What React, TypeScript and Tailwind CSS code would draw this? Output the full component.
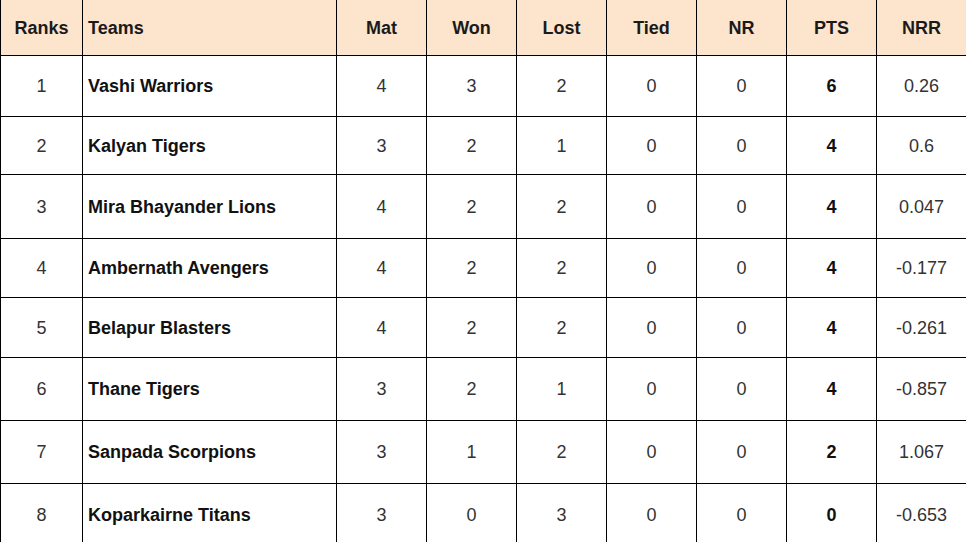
const ROWS = [
  { rank: 1, team: 'Vashi Warriors', mat: 4, won: 3, lost: 2, tied: 0, nr: 0, pts: 6, nrr: '0.26', h: 'h-[61px]' },
  { rank: 2, team: 'Kalyan Tigers', mat: 3, won: 2, lost: 1, tied: 0, nr: 0, pts: 4, nrr: '0.6', h: 'h-[58px]' },
  { rank: 3, team: 'Mira Bhayander Lions', mat: 4, won: 2, lost: 2, tied: 0, nr: 0, pts: 4, nrr: '0.047', h: 'h-[64px]' },
  { rank: 4, team: 'Ambernath Avengers', mat: 4, won: 2, lost: 2, tied: 0, nr: 0, pts: 4, nrr: '-0.177', h: 'h-[59px]' },
  { rank: 5, team: 'Belapur Blasters', mat: 4, won: 2, lost: 2, tied: 0, nr: 0, pts: 4, nrr: '-0.261', h: 'h-[60px]' },
  { rank: 6, team: 'Thane Tigers', mat: 3, won: 2, lost: 1, tied: 0, nr: 0, pts: 4, nrr: '-0.857', h: 'h-[63px]' },
  { rank: 7, team: 'Sanpada Scorpions', mat: 3, won: 1, lost: 2, tied: 0, nr: 0, pts: 2, nrr: '1.067', h: 'h-[63px]' },
  { rank: 8, team: 'Koparkairne Titans', mat: 3, won: 0, lost: 3, tied: 0, nr: 0, pts: 0, nrr: '-0.653', h: 'h-[63px]' },
];

const HEADERS = ['Mat', 'Won', 'Lost', 'Tied', 'NR', 'PTS', 'NRR'];

export default function App() {
  return (
    <div className="h-[542px] w-[966px] overflow-hidden bg-white font-['Liberation_Sans',Arial,sans-serif] text-[18px]">
      <table className="w-[967px] table-fixed border-collapse">
        <colgroup>
          <col className="w-[82px]" />
          <col className="w-[254px]" />
          {HEADERS.map((h) => (
            <col key={h} className="w-[90px]" />
          ))}
        </colgroup>
        <thead>
          <tr className="h-[55px] bg-[#fce4cd]">
            <th className="border border-t-0 border-black pt-[2px] text-center font-bold text-[#1a1a1a]">Ranks</th>
            <th className="border border-t-0 border-black pl-[5px] pt-[2px] text-left font-bold text-[#1a1a1a]">Teams</th>
            {HEADERS.map((h) => (
              <th key={h} className="border border-t-0 border-black pt-[2px] text-center font-bold text-[#1a1a1a]">
                {h}
              </th>
            ))}
          </tr>
        </thead>
        <tbody>
          {ROWS.map((r) => (
            <tr key={r.rank} className={r.h}>
              <td className="border border-black pt-[2px] text-center text-[#333]">{r.rank}</td>
              <td className="border border-black pl-[5px] pt-[2px] text-left font-bold text-[#111]">{r.team}</td>
              <td className="border border-black pt-[2px] text-center text-[#333]">{r.mat}</td>
              <td className="border border-black pt-[2px] text-center text-[#333]">{r.won}</td>
              <td className="border border-black pt-[2px] text-center text-[#333]">{r.lost}</td>
              <td className="border border-black pt-[2px] text-center text-[#333]">{r.tied}</td>
              <td className="border border-black pt-[2px] text-center text-[#333]">{r.nr}</td>
              <td className="border border-black pt-[2px] text-center font-bold text-[#111]">{r.pts}</td>
              <td className="border border-black pt-[2px] text-center text-[#333]">{r.nrr}</td>
            </tr>
          ))}
        </tbody>
      </table>
    </div>
  );
}
